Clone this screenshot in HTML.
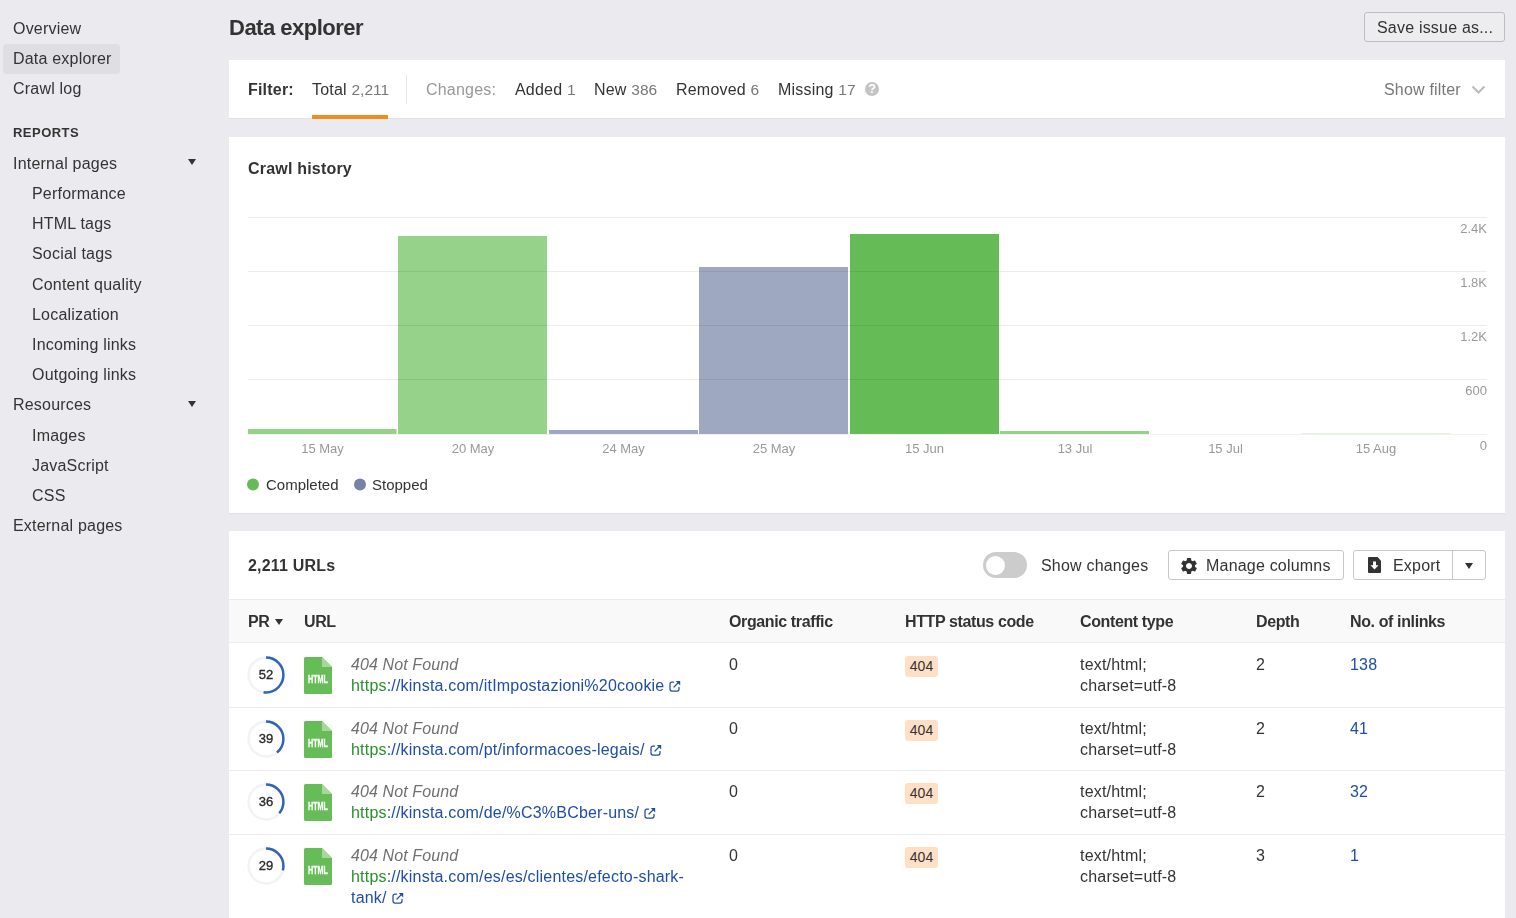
<!DOCTYPE html>
<html><head><meta charset="utf-8">
<style>
*{box-sizing:border-box;margin:0;padding:0}
html,body{width:1516px;height:918px;overflow:hidden}
body{background:#ebebef;font-family:"Liberation Sans",sans-serif;font-size:16px;color:#333;position:relative}
.t{position:absolute;white-space:nowrap;line-height:20px;letter-spacing:0.2px;will-change:transform}
.b{font-weight:bold}
.h{letter-spacing:-0.38px}
.g{color:#999}
.n{color:#777;font-size:15.5px;letter-spacing:0}
.panel{position:absolute;left:229px;width:1276px;background:#fff;box-shadow:0 1px 0 #e1e1e5}
.side .sub{left:32px}
.tri{position:absolute;width:0;height:0;border-left:4.5px solid transparent;border-right:4.5px solid transparent;border-top:6.5px solid #333}
</style></head><body>

<!-- sidebar -->
<div class="side">
<div style="position:absolute;left:3px;top:44px;width:117px;height:30px;background:#dfdfe3;border-radius:4px"></div>
<div class="t" style="left:13px;top:19px">Overview</div>
<div class="t" style="left:13px;top:49px">Data explorer</div>
<div class="t" style="left:13px;top:79px">Crawl log</div>
<div class="t b" style="left:13px;top:123px;font-size:13px;letter-spacing:0.47px">REPORTS</div>
<div class="t" style="left:13px;top:154px">Internal pages</div>
<div class="tri" style="left:188px;top:159px"></div>
<div class="t sub" style="top:184px">Performance</div>
<div class="t sub" style="top:214px">HTML tags</div>
<div class="t sub" style="top:244px">Social tags</div>
<div class="t sub" style="top:275px">Content quality</div>
<div class="t sub" style="top:305px">Localization</div>
<div class="t sub" style="top:335px">Incoming links</div>
<div class="t sub" style="top:365px">Outgoing links</div>
<div class="t" style="left:13px;top:395px">Resources</div>
<div class="tri" style="left:188px;top:401px"></div>
<div class="t sub" style="top:426px">Images</div>
<div class="t sub" style="top:456px">JavaScript</div>
<div class="t sub" style="top:486px">CSS</div>
<div class="t" style="left:13px;top:516px">External pages</div>
</div>

<!-- header -->
<div class="t b" style="left:229px;top:16px;font-size:22px;line-height:24px;letter-spacing:-0.5px">Data explorer</div>
<div style="position:absolute;left:1364px;top:12px;width:141px;height:30px;border:1px solid #bdbdc2;border-radius:3px;background:#ededf0"></div>
<div class="t" style="left:1377px;top:18px">Save issue as...</div>

<!-- filter panel -->
<div class="panel" style="top:60px;height:58px"></div>
<div class="t b" style="left:248px;top:80px">Filter:</div>
<div class="t" style="left:312px;top:80px">Total <span class="n">2,211</span></div>
<div style="position:absolute;left:312px;top:115px;width:76px;height:4px;background:#ef8d20"></div>
<div style="position:absolute;left:406px;top:75px;width:1px;height:29px;background:#e6e6e6"></div>
<div class="t g" style="left:426px;top:80px">Changes:</div>
<div class="t" style="left:515px;top:80px">Added <span class="n">1</span></div>
<div class="t" style="left:594px;top:80px">New <span class="n">386</span></div>
<div class="t" style="left:676px;top:80px">Removed <span class="n">6</span></div>
<div class="t" style="left:778px;top:80px">Missing <span class="n">17</span></div>
<div style="position:absolute;left:865px;top:82px;width:14px;height:14px;border-radius:50%;background:#c4c4c4;color:#fff;font-size:12.5px;font-weight:bold;line-height:15px;text-align:center">?</div>
<div class="t" style="left:1384px;top:80px;color:#777">Show filter</div>
<svg style="position:absolute;left:1471px;top:85px" width="15" height="10"><path d="M1.5 1.5 L7.5 7.5 L13.5 1.5" fill="none" stroke="#bbb" stroke-width="2"/></svg>

<!-- chart panel -->
<div class="panel" style="top:137px;height:376px"></div>
<div class="t b" style="left:248px;top:159px">Crawl history</div>
<svg style="position:absolute;left:0;top:0" width="1516" height="918" font-family="Liberation Sans" font-size="13">
<g fill="#96d28a">
<rect x="248" y="429" width="148.5" height="5"/>
<rect x="398" y="236" width="149" height="198"/>
<rect x="1000" y="431" width="149" height="3"/>
</g>
<g fill="#9ea8c0">
<rect x="549" y="430" width="149" height="4"/>
<rect x="699" y="267" width="149" height="167"/>
</g>
<rect x="850" y="234" width="149" height="200" fill="#65bc56"/>
<rect x="1301" y="433" width="150" height="1" fill="#e3f1df"/>
<g fill="#000" fill-opacity="0.075">
<rect x="248" y="217" width="1239" height="1"/>
<rect x="248" y="271" width="1239" height="1"/>
<rect x="248" y="325" width="1239" height="1"/>
<rect x="248" y="379" width="1239" height="1"/>
</g>
<rect x="248" y="434" width="1239" height="1" fill="#000" fill-opacity="0.06"/>
<g fill="#999" text-anchor="middle">
<text x="322.5" y="453">15 May</text>
<text x="473" y="453">20 May</text>
<text x="623.5" y="453">24 May</text>
<text x="774" y="453">25 May</text>
<text x="924.5" y="453">15 Jun</text>
<text x="1075" y="453">13 Jul</text>
<text x="1225.5" y="453">15 Jul</text>
<text x="1376" y="453">15 Aug</text>
</g>
<g fill="#999" text-anchor="end">
<text x="1487" y="233">2.4K</text>
<text x="1487" y="287">1.8K</text>
<text x="1487" y="341">1.2K</text>
<text x="1487" y="395">600</text>
<text x="1487" y="450">0</text>
</g>
<circle cx="253" cy="484.5" r="6" fill="#65bc56"/>
<circle cx="360" cy="484.5" r="6" fill="#7483a6"/>
</svg>
<div class="t" style="left:266px;top:475px;font-size:15px;letter-spacing:0">Completed</div>
<div class="t" style="left:372px;top:475px;font-size:15px;letter-spacing:0">Stopped</div>

<!-- table panel -->
<div class="panel" style="top:531px;height:400px"></div>
<div class="t b" style="left:248px;top:556px">2,211 URLs</div>
<div style="position:absolute;left:983px;top:552px;width:44px;height:26px;border-radius:13px;background:#cccccc"></div>
<div style="position:absolute;left:986px;top:556px;width:19px;height:19px;border-radius:50%;background:#fff"></div>
<div class="t" style="left:1041px;top:556px">Show changes</div>
<div style="position:absolute;left:1168px;top:550px;width:176px;height:30px;border:1px solid #c8c8cc;border-radius:3px;background:#fff"></div>
<svg style="position:absolute;left:1178.5px;top:555.8px" width="20" height="20" viewBox="0 0 24 24"><path fill="#333" d="M19.14 12.94c.04-.3.06-.61.06-.94 0-.32-.02-.64-.07-.94l2.03-1.58a.49.49 0 0 0 .12-.61l-1.920-3.32a.488.488 0 0 0-.59-.22l-2.39.96c-.5-.38-1.03-.7-1.62-.94l-.36-2.54a.484.484 0 0 0-.48-.41h-3.84c-.24 0-.43.17-.47.41l-.36 2.54c-.59.24-1.13.57-1.62.94l-2.39-.96c-.22-.08-.47 0-.59.22L2.74 8.87c-.12.21-.08.47.12.61l2.03 1.58c-.05.3-.09.63-.09.94s.02.64.07.94l-2.03 1.58a.49.49 0 0 0-.12.61l1.92 3.32c.12.22.37.29.59.22l2.39-.96c.5.38 1.03.7 1.62.94l.36 2.54c.05.24.24.41.48.41h3.840c.24 0 .44-.17.47-.41l.36-2.54c.59-.24 1.13-.56 1.62-.94l2.39.96c.22.08.47 0 .59-.22l1.92-3.32c.12-.22.07-.47-.12-.61l-2.01-1.58zM12 15.6c-1.98 0-3.6-1.62-3.6-3.6s1.62-3.6 3.6-3.6 3.6 1.62 3.6 3.6-1.62 3.6-3.6 3.6z"/></svg>
<div class="t" style="left:1206px;top:556px">Manage columns</div>
<div style="position:absolute;left:1353px;top:550px;width:133px;height:30px;border:1px solid #c8c8cc;border-radius:3px;background:#fff"></div>
<div style="position:absolute;left:1452px;top:551px;width:1px;height:28px;background:#c8c8cc"></div>
<svg style="position:absolute;left:1368px;top:557px" width="14" height="17"><path d="M1 0 H9.5 L13 3.8 V15 a1 1 0 0 1 -1 1 H1 a1 1 0 0 1 -1 -1 V1 a1 1 0 0 1 1 -1Z" fill="#333"/><path d="M5 4.5 H8 V8.3 H10.5 L6.5 12.6 L2.5 8.3 H5Z" fill="#fff"/></svg>
<div class="t" style="left:1393px;top:556px">Export</div>
<div class="tri" style="left:1465px;top:563px"></div>
<div style="position:absolute;left:229px;top:599px;width:1276px;height:44px;background:#f9f9fa;border-top:1px solid #ebebed;border-bottom:1px solid #ebebed"></div>
<div class="t b h" style="left:248px;top:612px">PR</div>
<div class="tri" style="left:275px;top:619px"></div>
<div class="t b h" style="left:304px;top:612px">URL</div>
<div class="t b h" style="left:729px;top:612px">Organic traffic</div>
<div class="t b h" style="left:905px;top:612px">HTTP status code</div>
<div class="t b h" style="left:1080px;top:612px">Content type</div>
<div class="t b h" style="left:1256px;top:612px">Depth</div>
<div class="t b h" style="left:1350px;top:612px">No. of inlinks</div>
<!-- table rows -->
<svg style="position:absolute;left:247px;top:656px" width="38" height="38"><circle cx="19" cy="19" r="17.4" fill="none" stroke="#f3f3f5" stroke-width="2.6"/><circle cx="19" cy="19" r="17.4" fill="none" stroke="#3164b8" stroke-width="2.5" stroke-dasharray="56.85 109.33" transform="rotate(-90 19 19)"/><text x="19" y="22.8" text-anchor="middle" font-family="Liberation Sans" font-size="13" fill="#2a2a2a" stroke="#2a2a2a" stroke-width="0.35">52</text></svg>
<svg style="position:absolute;left:304px;top:657px" width="28" height="37"><path d="M1.5 0 H18 L28 10 V35.5 a1.5 1.5 0 0 1 -1.5 1.5 H1.5 a1.5 1.5 0 0 1 -1.5 -1.5 V1.5 a1.5 1.5 0 0 1 1.5 -1.5Z" fill="#66bd57"/><path d="M18 0 L28 10 H18Z" fill="#a6d89b"/><text x="14" y="26.3" text-anchor="middle" font-family="Liberation Sans" font-size="10" font-weight="bold" fill="#fff" stroke="#fff" stroke-width="0.3" transform="translate(14 0) scale(0.72 1) translate(-14 0)">HTML</text></svg>
<div class="t" style="left:351px;top:655px;font-style:italic;color:#707070;letter-spacing:0.1px">404 Not Found</div>
<div class="t" style="left:351px;top:676px;color:#1f4ea6"><span style="color:#26912a">https</span>://kinsta.com/itImpostazioni%20cookie<svg width="12" height="12" style="margin-left:5px;vertical-align:-1px"><path d="M4.6 2 H3 a2 2 0 0 0 -2 2 V9 a2 2 0 0 0 2 2 H8 a2 2 0 0 0 2 -2 V7.4" fill="none" stroke="#1f4ea6" stroke-width="1.25" stroke-linecap="round"/><path d="M5 7 L9.6 2.4" stroke="#1f4ea6" stroke-width="1.25" stroke-linecap="round"/><path d="M6.8 1 H11.2 V5.4Z" fill="#1f4ea6"/></svg></div>
<div class="t" style="left:729px;top:655px">0</div>
<div style="position:absolute;left:905px;top:656px;width:33px;height:21px;background:#fde0c5;border-radius:3px;font-size:14px;line-height:21px;text-align:center;color:#333">404</div>
<div class="t" style="left:1080px;top:655px">text/html;</div>
<div class="t" style="left:1080px;top:676px">charset=utf-8</div>
<div class="t" style="left:1256px;top:655px">2</div>
<div class="t" style="left:1350px;top:655px;color:#1f4ea6">138</div>
<div style="position:absolute;left:229px;top:707px;width:1276px;height:1px;background:#ebebed"></div>
<svg style="position:absolute;left:247px;top:720px" width="38" height="38"><circle cx="19" cy="19" r="17.4" fill="none" stroke="#f3f3f5" stroke-width="2.6"/><circle cx="19" cy="19" r="17.4" fill="none" stroke="#3164b8" stroke-width="2.5" stroke-dasharray="42.64 109.33" transform="rotate(-90 19 19)"/><text x="19" y="22.8" text-anchor="middle" font-family="Liberation Sans" font-size="13" fill="#2a2a2a" stroke="#2a2a2a" stroke-width="0.35">39</text></svg>
<svg style="position:absolute;left:304px;top:721px" width="28" height="37"><path d="M1.5 0 H18 L28 10 V35.5 a1.5 1.5 0 0 1 -1.5 1.5 H1.5 a1.5 1.5 0 0 1 -1.5 -1.5 V1.5 a1.5 1.5 0 0 1 1.5 -1.5Z" fill="#66bd57"/><path d="M18 0 L28 10 H18Z" fill="#a6d89b"/><text x="14" y="26.3" text-anchor="middle" font-family="Liberation Sans" font-size="10" font-weight="bold" fill="#fff" stroke="#fff" stroke-width="0.3" transform="translate(14 0) scale(0.72 1) translate(-14 0)">HTML</text></svg>
<div class="t" style="left:351px;top:719px;font-style:italic;color:#707070;letter-spacing:0.1px">404 Not Found</div>
<div class="t" style="left:351px;top:740px;color:#1f4ea6"><span style="color:#26912a">https</span>://kinsta.com/pt/informacoes-legais/<svg width="12" height="12" style="margin-left:5px;vertical-align:-1px"><path d="M4.6 2 H3 a2 2 0 0 0 -2 2 V9 a2 2 0 0 0 2 2 H8 a2 2 0 0 0 2 -2 V7.4" fill="none" stroke="#1f4ea6" stroke-width="1.25" stroke-linecap="round"/><path d="M5 7 L9.6 2.4" stroke="#1f4ea6" stroke-width="1.25" stroke-linecap="round"/><path d="M6.8 1 H11.2 V5.4Z" fill="#1f4ea6"/></svg></div>
<div class="t" style="left:729px;top:719px">0</div>
<div style="position:absolute;left:905px;top:720px;width:33px;height:21px;background:#fde0c5;border-radius:3px;font-size:14px;line-height:21px;text-align:center;color:#333">404</div>
<div class="t" style="left:1080px;top:719px">text/html;</div>
<div class="t" style="left:1080px;top:740px">charset=utf-8</div>
<div class="t" style="left:1256px;top:719px">2</div>
<div class="t" style="left:1350px;top:719px;color:#1f4ea6">41</div>
<div style="position:absolute;left:229px;top:770px;width:1276px;height:1px;background:#ebebed"></div>
<svg style="position:absolute;left:247px;top:783px" width="38" height="38"><circle cx="19" cy="19" r="17.4" fill="none" stroke="#f3f3f5" stroke-width="2.6"/><circle cx="19" cy="19" r="17.4" fill="none" stroke="#3164b8" stroke-width="2.5" stroke-dasharray="39.36 109.33" transform="rotate(-90 19 19)"/><text x="19" y="22.8" text-anchor="middle" font-family="Liberation Sans" font-size="13" fill="#2a2a2a" stroke="#2a2a2a" stroke-width="0.35">36</text></svg>
<svg style="position:absolute;left:304px;top:784px" width="28" height="37"><path d="M1.5 0 H18 L28 10 V35.5 a1.5 1.5 0 0 1 -1.5 1.5 H1.5 a1.5 1.5 0 0 1 -1.5 -1.5 V1.5 a1.5 1.5 0 0 1 1.5 -1.5Z" fill="#66bd57"/><path d="M18 0 L28 10 H18Z" fill="#a6d89b"/><text x="14" y="26.3" text-anchor="middle" font-family="Liberation Sans" font-size="10" font-weight="bold" fill="#fff" stroke="#fff" stroke-width="0.3" transform="translate(14 0) scale(0.72 1) translate(-14 0)">HTML</text></svg>
<div class="t" style="left:351px;top:782px;font-style:italic;color:#707070;letter-spacing:0.1px">404 Not Found</div>
<div class="t" style="left:351px;top:803px;color:#1f4ea6"><span style="color:#26912a">https</span>://kinsta.com/de/%C3%BCber-uns/<svg width="12" height="12" style="margin-left:5px;vertical-align:-1px"><path d="M4.6 2 H3 a2 2 0 0 0 -2 2 V9 a2 2 0 0 0 2 2 H8 a2 2 0 0 0 2 -2 V7.4" fill="none" stroke="#1f4ea6" stroke-width="1.25" stroke-linecap="round"/><path d="M5 7 L9.6 2.4" stroke="#1f4ea6" stroke-width="1.25" stroke-linecap="round"/><path d="M6.8 1 H11.2 V5.4Z" fill="#1f4ea6"/></svg></div>
<div class="t" style="left:729px;top:782px">0</div>
<div style="position:absolute;left:905px;top:783px;width:33px;height:21px;background:#fde0c5;border-radius:3px;font-size:14px;line-height:21px;text-align:center;color:#333">404</div>
<div class="t" style="left:1080px;top:782px">text/html;</div>
<div class="t" style="left:1080px;top:803px">charset=utf-8</div>
<div class="t" style="left:1256px;top:782px">2</div>
<div class="t" style="left:1350px;top:782px;color:#1f4ea6">32</div>
<div style="position:absolute;left:229px;top:834px;width:1276px;height:1px;background:#ebebed"></div>
<svg style="position:absolute;left:247px;top:847px" width="38" height="38"><circle cx="19" cy="19" r="17.4" fill="none" stroke="#f3f3f5" stroke-width="2.6"/><circle cx="19" cy="19" r="17.4" fill="none" stroke="#3164b8" stroke-width="2.5" stroke-dasharray="31.70 109.33" transform="rotate(-90 19 19)"/><text x="19" y="22.8" text-anchor="middle" font-family="Liberation Sans" font-size="13" fill="#2a2a2a" stroke="#2a2a2a" stroke-width="0.35">29</text></svg>
<svg style="position:absolute;left:304px;top:848px" width="28" height="37"><path d="M1.5 0 H18 L28 10 V35.5 a1.5 1.5 0 0 1 -1.5 1.5 H1.5 a1.5 1.5 0 0 1 -1.5 -1.5 V1.5 a1.5 1.5 0 0 1 1.5 -1.5Z" fill="#66bd57"/><path d="M18 0 L28 10 H18Z" fill="#a6d89b"/><text x="14" y="26.3" text-anchor="middle" font-family="Liberation Sans" font-size="10" font-weight="bold" fill="#fff" stroke="#fff" stroke-width="0.3" transform="translate(14 0) scale(0.72 1) translate(-14 0)">HTML</text></svg>
<div class="t" style="left:351px;top:846px;font-style:italic;color:#707070;letter-spacing:0.1px">404 Not Found</div>
<div class="t" style="left:351px;top:867px;color:#1f4ea6"><span style="color:#26912a">https</span>://kinsta.com/es/es/clientes/efecto-shark-</div>
<div class="t" style="left:351px;top:888px;color:#1f4ea6">tank/<svg width="12" height="12" style="margin-left:5px;vertical-align:-1px"><path d="M4.6 2 H3 a2 2 0 0 0 -2 2 V9 a2 2 0 0 0 2 2 H8 a2 2 0 0 0 2 -2 V7.4" fill="none" stroke="#1f4ea6" stroke-width="1.25" stroke-linecap="round"/><path d="M5 7 L9.6 2.4" stroke="#1f4ea6" stroke-width="1.25" stroke-linecap="round"/><path d="M6.8 1 H11.2 V5.4Z" fill="#1f4ea6"/></svg></div>
<div class="t" style="left:729px;top:846px">0</div>
<div style="position:absolute;left:905px;top:847px;width:33px;height:21px;background:#fde0c5;border-radius:3px;font-size:14px;line-height:21px;text-align:center;color:#333">404</div>
<div class="t" style="left:1080px;top:846px">text/html;</div>
<div class="t" style="left:1080px;top:867px">charset=utf-8</div>
<div class="t" style="left:1256px;top:846px">3</div>
<div class="t" style="left:1350px;top:846px;color:#1f4ea6">1</div>
</body></html>
